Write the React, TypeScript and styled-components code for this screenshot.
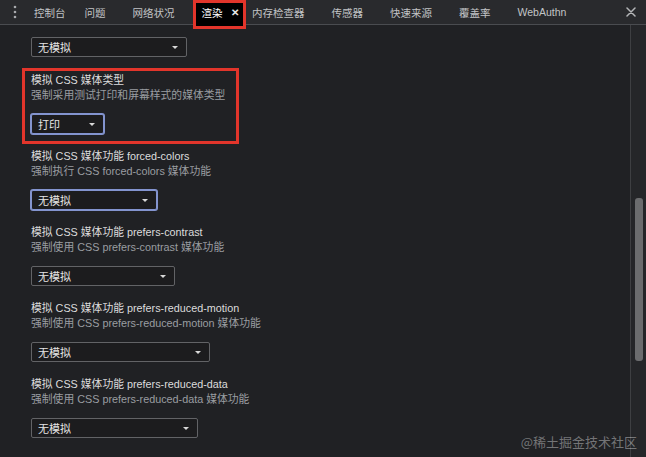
import styled, { createGlobalStyle } from "styled-components";

const GlobalStyle = createGlobalStyle`
  html, body {
    margin: 0;
    padding: 0;
    background: #202124;
  }
  body {
    font-family: "Liberation Sans", "Noto Sans CJK SC", sans-serif;
  }
`;

const Frame = styled.div`
  position: relative;
  width: 646px;
  height: 457px;
  display: flex;
  flex-direction: column;
  overflow: hidden;
  background: #202124;
`;

const TabBar = styled.div`
  height: 24px;
  flex: none;
  display: flex;
  align-items: stretch;
  background: #292a2d;
  border-bottom: 1px solid #4a4c50;
  font-size: 10.5px;
  color: #c2c4c6;
`;

const MenuButton = styled.div`
  width: 20px;
  display: flex;
  align-items: center;
  justify-content: center;
  padding-left: 9px;
  box-sizing: border-box;
`;

const Tab = styled.div<{ $active?: boolean; $lead?: boolean }>`
  position: relative;
  display: flex;
  align-items: center;
  gap: 8px;
  padding: ${(p) =>
    p.$lead ? "0 5.5px 0 14px" : p.$active ? "0 0 0 13.5px" : "0 13.5px"};
  white-space: nowrap;
  color: ${(p) => (p.$active ? "#ffffff" : "#c2c4c6")};

  ${(p) =>
    p.$active &&
    `
    &::before {
      content: "";
      position: absolute;
      left: 4.5px;
      right: -7px;
      top: 0;
      bottom: -5px;
      background: #000;
      border: 3px solid #e2352b;
      z-index: 0;
    }
  `}
`;

const TabLabel = styled.span`
  position: relative;
  z-index: 1;
`;

const TabClose = styled.span`
  position: relative;
  z-index: 1;
  font-size: 10px;
  font-weight: bold;
  color: #e8e8e8;
`;

const Spacer = styled.div`
  flex: 1;
`;

const CloseButton = styled.div`
  width: 30px;
  display: flex;
  align-items: center;
  justify-content: center;
`;

const Body = styled.div`
  flex: 1;
  min-height: 0;
  display: flex;
`;

const Panel = styled.div`
  flex: 1;
  padding: 12px 0 0 31px;
  display: flex;
  flex-direction: column;
  align-items: flex-start;
`;

const TopRow = styled.div`
  padding-bottom: 11px;
`;

const Section = styled.div<{ $highlight?: boolean }>`
  margin-left: -9px;
  padding: 2px 11px 7px 6px;
  border: 3px solid ${(p) => (p.$highlight ? "#e2352b" : "transparent")};
  display: flex;
  flex-direction: column;
  align-items: flex-start;
`;

const Title = styled.div`
  font-size: 10.8px;
  line-height: 15px;
  color: #dcdcdc;
  white-space: nowrap;
`;

const Desc = styled.div`
  font-size: 10.8px;
  line-height: 15px;
  color: #9a9da1;
  white-space: nowrap;
`;

const Select = styled.div<{ $width: number; $focused?: boolean; $gap?: number }>`
  box-sizing: border-box;
  width: ${(p) => p.$width}px;
  height: 20px;
  margin-top: ${(p) => p.$gap ?? 11}px;
  padding: 0 8px 0 6px;
  display: flex;
  align-items: center;
  justify-content: space-between;
  background: #1c1c1e;
  border: 1px solid ${(p) => (p.$focused ? "#8394cf" : "#626366")};
  border-radius: 2px;
  box-shadow: ${(p) => (p.$focused ? "0 0 0 1px #8394cf" : "none")};
  font-size: 11px;
  color: #e6e6e6;
`;

const Caret = styled.span`
  width: 0;
  height: 0;
  border-left: 3px solid transparent;
  border-right: 3px solid transparent;
  border-top: 3px solid #d8d8d8;
`;

const Scrollbar = styled.div`
  width: 16px;
  flex: none;
  border-left: 1px solid #3e3f42;
  background: #252629;
  box-sizing: border-box;
  display: flex;
  justify-content: center;
`;

const Thumb = styled.div`
  width: 8px;
  height: 163px;
  margin-top: 173px;
  margin-left: 1px;
  border-radius: 3px;
  background: #6b6c6e;
`;

const Watermark = styled.div`
  position: absolute;
  right: 9px;
  bottom: 6px;
  font-size: 13px;
  color: rgba(255, 255, 255, 0.38);
  font-family: "Noto Sans CJK SC", sans-serif;
`;

const tabs = ["问题", "网络状况"];
const tabsAfter = ["内存检查器", "传感器", "快速来源", "覆盖率", "WebAuthn"];

type Feature = {
  title: string;
  desc: string;
  value: string;
  width: number;
  focused?: boolean;
  highlight?: boolean;
};

const features: Feature[] = [
  {
    title: "模拟 CSS 媒体类型",
    desc: "强制采用测试打印和屏幕样式的媒体类型",
    value: "打印",
    width: 73,
    focused: true,
    highlight: true,
  },
  {
    title: "模拟 CSS 媒体功能 forced-colors",
    desc: "强制执行 CSS forced-colors 媒体功能",
    value: "无模拟",
    width: 126,
    focused: true,
  },
  {
    title: "模拟 CSS 媒体功能 prefers-contrast",
    desc: "强制使用 CSS prefers-contrast 媒体功能",
    value: "无模拟",
    width: 144,
  },
  {
    title: "模拟 CSS 媒体功能 prefers-reduced-motion",
    desc: "强制使用 CSS prefers-reduced-motion 媒体功能",
    value: "无模拟",
    width: 179,
  },
  {
    title: "模拟 CSS 媒体功能 prefers-reduced-data",
    desc: "强制使用 CSS prefers-reduced-data 媒体功能",
    value: "无模拟",
    width: 167,
  },
];

const App: React.FC = () => {
  return (
    <>
      <GlobalStyle />
      <Frame>
        <TabBar>
          <MenuButton>
            <svg width="4" height="14" viewBox="0 0 4 14">
              <circle cx="2" cy="2" r="1.3" fill="#a8aaad" />
              <circle cx="2" cy="7" r="1.3" fill="#a8aaad" />
              <circle cx="2" cy="12" r="1.3" fill="#a8aaad" />
            </svg>
          </MenuButton>
          <Tab $lead>
            <TabLabel>控制台</TabLabel>
          </Tab>
          {tabs.map((t) => (
            <Tab key={t}>
              <TabLabel>{t}</TabLabel>
            </Tab>
          ))}
          <Tab $active>
            <TabLabel>渲染</TabLabel>
            <TabClose>✕</TabClose>
          </Tab>
          {tabsAfter.map((t) => (
            <Tab key={t}>
              <TabLabel>{t}</TabLabel>
            </Tab>
          ))}
          <Spacer />
          <CloseButton>
            <svg width="10" height="10" viewBox="0 0 10 10">
              <path
                d="M1 1 L9 9 M9 1 L1 9"
                stroke="#b4b6b8"
                strokeWidth="1.5"
                strokeLinecap="round"
              />
            </svg>
          </CloseButton>
        </TabBar>
        <Body>
          <Panel>
            <TopRow>
              <Select $width={156} $gap={0}>
                <span>无模拟</span>
                <Caret />
              </Select>
            </TopRow>
            {features.map((f) => (
              <Section key={f.title} $highlight={f.highlight}>
                <Title>{f.title}</Title>
                <Desc>{f.desc}</Desc>
                <Select $width={f.width} $focused={f.focused}>
                  <span>{f.value}</span>
                  <Caret />
                </Select>
              </Section>
            ))}
          </Panel>
          <Scrollbar>
            <Thumb />
          </Scrollbar>
        </Body>
        <Watermark>@稀土掘金技术社区</Watermark>
      </Frame>
    </>
  );
};

export default App;
